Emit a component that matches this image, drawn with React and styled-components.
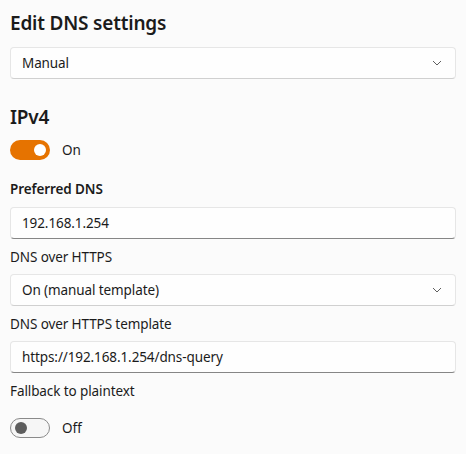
import styled, { createGlobalStyle } from "styled-components";

const Global = createGlobalStyle`
  body {
    margin: 0;
    background: #fbfbfb;
    font-family: "Noto Sans", "Open Sans", sans-serif;
    color: #1b1b1b;
  }
`;

const Page = styled.div`
  display: flex;
  flex-direction: column;
  padding: 9px 10px 0 10px;
`;

const Heading = styled.h2`
  margin: ${(p) => p.$top || 0}px 0 0 0;
  font-size: 19px;
  font-weight: 600;
  line-height: 28px;
  letter-spacing: -0.2px;
`;

const Label = styled.div`
  margin-top: ${(p) => p.$top || 8}px;
  font-size: 13.5px;
  line-height: 20px;
  font-weight: ${(p) => (p.$bold ? 600 : 400)};
  letter-spacing: -0.1px;
`;

const Field = styled.div`
  box-sizing: border-box;
  margin-top: ${(p) => p.$top || 7}px;
  height: 32px;
  width: 446px;
  display: flex;
  align-items: center;
  justify-content: space-between;
  padding: 0 13px 0 11px;
  background: #fefefe;
  border: 1px solid #e6e6e6;
  border-bottom-color: ${(p) => (p.$input ? "#868686" : "#d0d0d0")};
  border-radius: 4px;
  font-size: 13.5px;
  letter-spacing: -0.1px;
`;

const ToggleRow = styled.div`
  margin-top: ${(p) => p.$top}px;
  display: flex;
  align-items: center;
  gap: 12px;
  font-size: 13.5px;
  height: 20px;
`;

const Track = styled.div`
  box-sizing: border-box;
  width: 40px;
  height: 20px;
  border-radius: 10px;
  display: flex;
  align-items: center;
  padding: 0 4px;
  justify-content: ${(p) => (p.$on ? "flex-end" : "flex-start")};
  background: ${(p) => (p.$on ? "#e67300" : "#f6f6f6")};
  border: ${(p) => (p.$on ? "none" : "1px solid #8a8a8a")};
`;

const Knob = styled.div`
  width: 12px;
  height: 12px;
  border-radius: 50%;
  background: ${(p) => (p.$on ? "#ffffff" : "#5d5d5d")};
`;

function Chevron() {
  return (
    <svg width="10" height="6" viewBox="0 0 10 6">
      <path d="M1 1 L5 5 L9 1" fill="none" stroke="#5f5f5f" strokeWidth="1" />
    </svg>
  );
}

function Toggle({ on, top }) {
  return (
    <ToggleRow $top={top}>
      <Track $on={on}>
        <Knob $on={on} />
      </Track>
      <span>{on ? "On" : "Off"}</span>
    </ToggleRow>
  );
}

export default function App() {
  return (
    <>
      <Global />
      <Page>
        <Heading>Edit DNS settings</Heading>
        <Field $top={10}>
          <span>Manual</span>
          <Chevron />
        </Field>
        <Heading $top={24}>IPv4</Heading>
        <Toggle on top={9} />
        <Label $bold $top={19}>Preferred DNS</Label>
        <Field $input $top={8}>
          <span>192.168.1.254</span>
        </Field>
        <Label $top={8}>DNS over HTTPS</Label>
        <Field>
          <span>On (manual template)</span>
          <Chevron />
        </Field>
        <Label $top={8}>DNS over HTTPS template</Label>
        <Field $input>
          <span>https://192.168.1.254/dns-query</span>
        </Field>
        <Label $top={8}>Fallback to plaintext</Label>
        <Toggle on={false} top={17} />
      </Page>
    </>
  );
}
